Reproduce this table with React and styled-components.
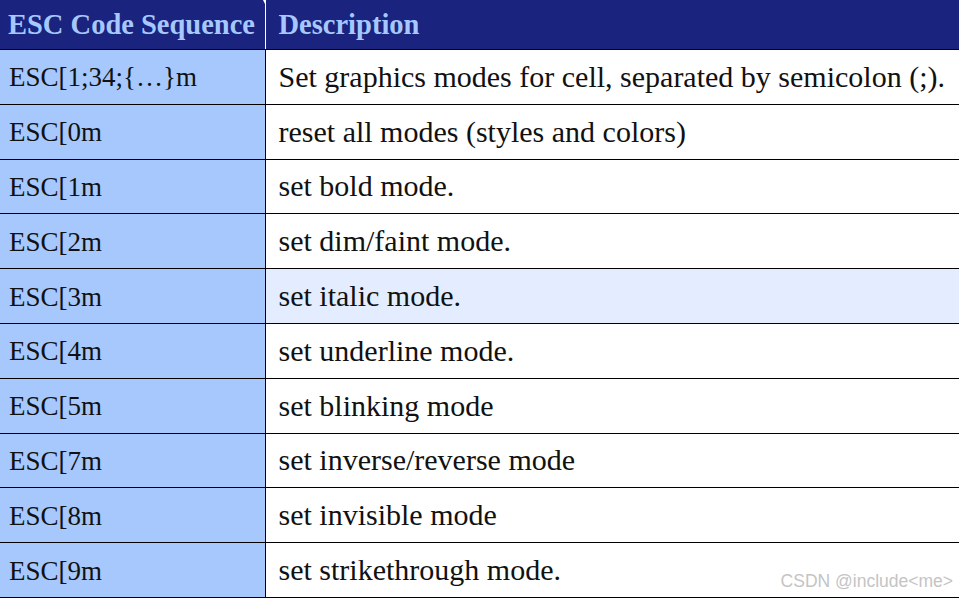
import styled, { createGlobalStyle } from "styled-components";

const Global = createGlobalStyle`
  html, body {
    margin: 0;
    padding: 0;
    background: #ffffff;
  }
`;

const Wrap = styled.div`
  position: relative;
  width: 959px;
  height: 598px;
  overflow: hidden;
  background: #ffffff;
`;

const Table = styled.table`
  width: 959px;
  border-collapse: collapse;
  table-layout: fixed;
  font-family: "Liberation Serif", "DejaVu Serif", serif;
  color: #111111;
`;

const HeadCell = styled.th`
  position: relative;
  height: 49px;
  padding: 0 0 0 ${(p) => (p.first ? "8px" : "13px")};
  background: #1a237e;
  color: #a6c8ff;
  font-size: 28.5px;
  font-weight: 700;
  text-align: left;
  vertical-align: middle;
  border-right: ${(p) => (p.first ? "1px solid #ffffff" : "none")};
  border-bottom: 1px solid #000000;
  white-space: nowrap;
`;

const Notch = styled.span`
  position: absolute;
  top: 0;
  right: -4px;
  width: 0;
  height: 0;
  border-left: 3px solid transparent;
  border-right: 3px solid transparent;
  border-top: 6px solid #ffffff;
`;

const Row = styled.tr`
  height: 54.8px;
`;

const CodeCell = styled.td`
  padding: 2px 0 0 9px;
  background: #a6c8fd;
  font-size: 27px;
  border: 1px solid #000000;
  border-left: none;
  vertical-align: middle;
  white-space: nowrap;
`;

const DescCell = styled.td`
  padding: 0 0 0 13px;
  background: ${(p) => (p.hot ? "#e3edff" : "#ffffff")};
  font-size: 30px;
  border: 1px solid #000000;
  border-right: none;
  vertical-align: middle;
  white-space: nowrap;
`;

const Watermark = styled.span`
  position: absolute;
  right: 6px;
  bottom: 6px;
  font-family: "Liberation Sans", Arial, sans-serif;
  font-size: 17.5px;
  color: #c4c4c4;
`;

const rows = [
  ["ESC[1;34;{…}m", "Set graphics modes for cell, separated by semicolon (;)."],
  ["ESC[0m", "reset all modes (styles and colors)"],
  ["ESC[1m", "set bold mode."],
  ["ESC[2m", "set dim/faint mode."],
  ["ESC[3m", "set italic mode.", true],
  ["ESC[4m", "set underline mode."],
  ["ESC[5m", "set blinking mode"],
  ["ESC[7m", "set inverse/reverse mode"],
  ["ESC[8m", "set invisible mode"],
  ["ESC[9m", "set strikethrough mode."],
];

export default function App() {
  return (
    <Wrap>
      <Global />
      <Table>
        <colgroup>
          <col style={{ width: 265 }} />
          <col />
        </colgroup>
        <thead>
          <tr>
            <HeadCell first>
              ESC Code Sequence
              <Notch />
            </HeadCell>
            <HeadCell>Description</HeadCell>
          </tr>
        </thead>
        <tbody>
          {rows.map(([code, desc, hot]) => (
            <Row key={code}>
              <CodeCell>{code}</CodeCell>
              <DescCell hot={hot}>{desc}</DescCell>
            </Row>
          ))}
        </tbody>
      </Table>
      <Watermark>CSDN @include&lt;me&gt;</Watermark>
    </Wrap>
  );
}
